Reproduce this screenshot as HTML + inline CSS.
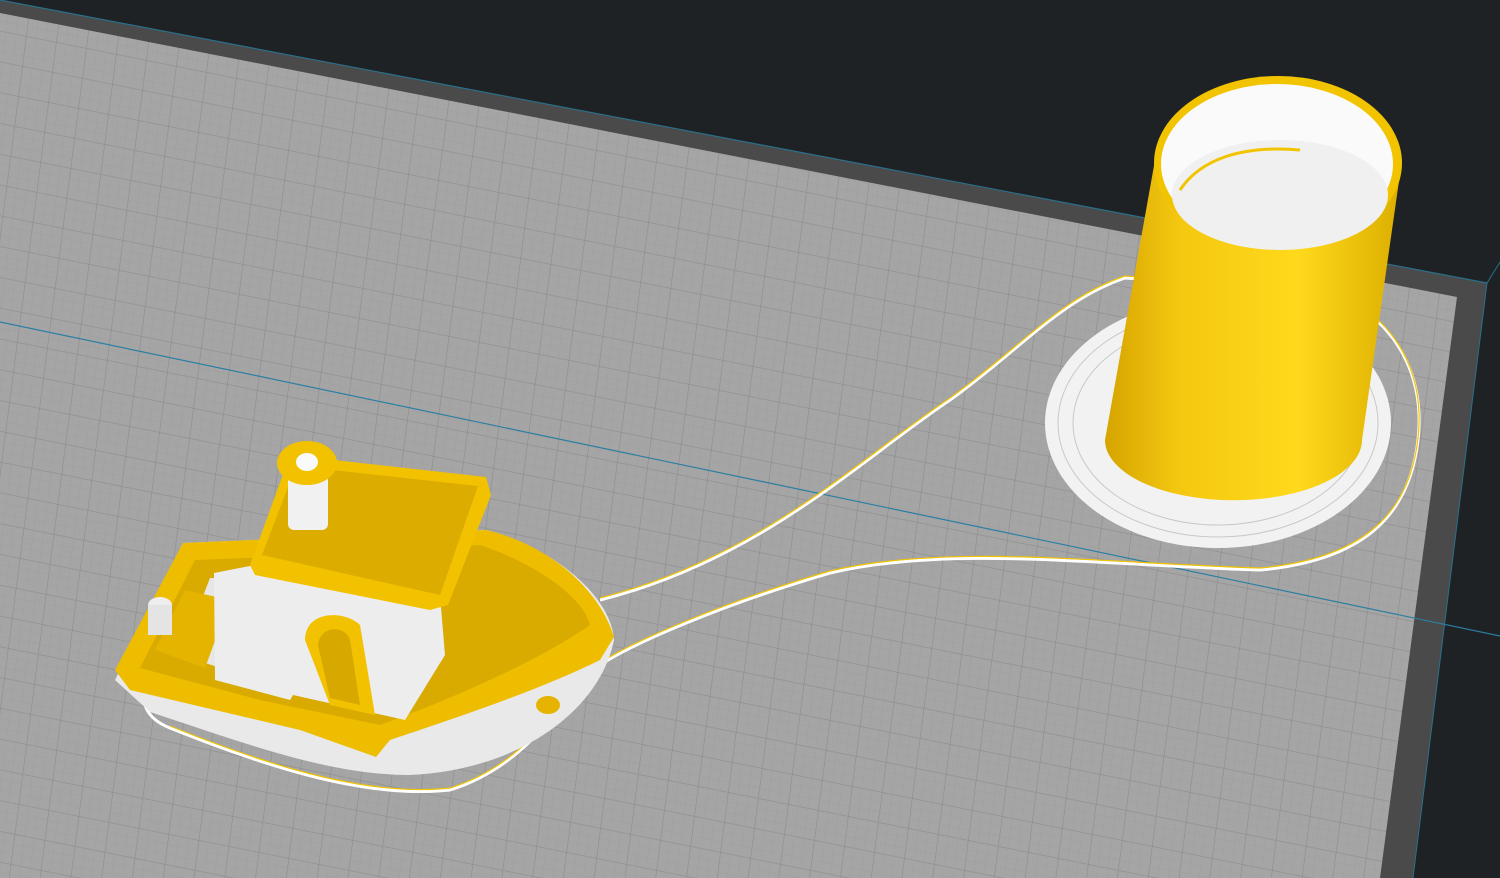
<!DOCTYPE html>
<html><head><meta charset="utf-8"><style>
html,body{margin:0;padding:0;background:#1e2225;overflow:hidden}
svg{display:block}
</style></head><body>
<svg width="1500" height="878" viewBox="0 0 1500 878" xmlns="http://www.w3.org/2000/svg">
<defs>
<pattern id="g" width="30" height="30" patternUnits="userSpaceOnUse" patternTransform="matrix(1,0.2,-0.13,1,0,0)">
<rect width="30" height="30" fill="#a5a5a5"/>
<path d="M0 0H30M0 0V30" stroke="#8c8c8c" stroke-width="1.2"/>
<path d="M0 10H30M0 20H30M10 0V30M20 0V30" stroke="#9e9e9e" stroke-width="0.5"/>
</pattern>
<linearGradient id="cyl" x1="0" x2="1" y1="0" y2="0">
<stop offset="0" stop-color="#d6a400"/><stop offset="0.25" stop-color="#f4c810"/><stop offset="0.65" stop-color="#ffd91c"/><stop offset="1" stop-color="#dcae00"/>
</linearGradient>
</defs>
<rect width="1500" height="878" fill="#1e2225"/>
<polygon points="0,0 1487,283 1413,878 0,878" fill="#4a4a4a"/>
<polygon points="0,13 1457,297 1380,878 0,878" fill="url(#g)"/>
<line x1="0" y1="0" x2="1487" y2="283" stroke="#2a6f8a" stroke-width="1.2"/>
<line x1="1487" y1="283" x2="1500" y2="262" stroke="#2a6f8a" stroke-width="1"/>
<line x1="1487" y1="283" x2="1413" y2="878" stroke="#2a6f8a" stroke-width="1"/>
<line x1="0" y1="322" x2="1500" y2="636" stroke="#2b7fa3" stroke-width="1.2"/>
<ellipse cx="1218" cy="423" rx="173" ry="125" fill="#f2f2f2"/>
<ellipse cx="1218" cy="423" rx="160" ry="114" fill="none" stroke="#c8c8c8" stroke-width="1"/>
<ellipse cx="1218" cy="423" rx="145" ry="102" fill="none" stroke="#c8c8c8" stroke-width="1"/>
<g fill="none">
<path d="M600,600 C760,560 860,460 950,400 C1020,350 1060,300 1125,278 L1330,292 C1400,320 1425,380 1418,440 C1410,510 1370,560 1260,570 C1100,565 950,545 830,573 C720,605 630,645 600,665" stroke="#fff" stroke-width="3"/>
<path d="M600,600 C760,560 860,460 950,400 C1020,350 1060,300 1125,278 L1330,292 C1400,320 1425,380 1418,440 C1410,510 1370,560 1260,570 C1100,565 950,545 830,573 C720,605 630,645 600,665" stroke="#f2c400" stroke-width="1.2" transform="translate(0,-2)"/>
<path d="M600,665 C560,700 530,765 450,790 C360,800 250,760 170,728 C145,718 140,700 148,690" stroke="#fff" stroke-width="3"/>
<path d="M600,663 C560,698 530,763 450,788 C360,798 250,758 170,726" stroke="#f2c400" stroke-width="1.2"/>
</g>
<path d="M1155,160 L1105,440 A128,60 0 0 0 1362,440 L1402,160 Z" fill="url(#cyl)"/>
<ellipse cx="1278" cy="163" rx="124" ry="87" fill="#f2c400"/>
<ellipse cx="1277" cy="164" rx="116" ry="80" fill="#fafafa"/>
<ellipse cx="1280" cy="195" rx="108" ry="55" fill="#f0f0f0"/>
<path d="M1180,190 C1200,160 1240,145 1300,150" fill="none" stroke="#f2c400" stroke-width="3"/>
<path d="M115,680 L183,543 L486,530 C560,550 612,600 614,640 C600,710 520,770 410,775 C330,775 250,745 150,712 Z" fill="#e9e9e9"/>
<path d="M115,670 L183,543 L486,530 C550,545 600,590 614,637 L600,660 C540,690 450,720 390,740 L376,757 L300,730 L130,690 Z" fill="#eebd00"/>
<path d="M140,668 L195,560 L300,556 L480,545 C540,565 585,600 590,625 C540,660 450,700 380,725 L260,700 Z" fill="#d9aa00"/>
<path d="M180,655 L210,578 L300,578 L290,690 Z" fill="#e6e6e6"/>
<path d="M155,650 L185,590 L230,600 L205,668 Z" fill="#e4b400"/>
<path d="M214,573 L255,565 L441,607 L445,655 L405,720 L293,695 L290,700 L215,680 Z" fill="#ededed"/>
<path d="M305,640 C305,610 345,610 360,625 L375,715 L330,705 Z" fill="#f2c200"/>
<path d="M318,645 C320,625 345,625 350,640 L360,705 L330,698 Z" fill="#d6a800"/>
<path d="M250,565 L290,455 L486,477 L491,495 L448,605 L430,610 L255,575 Z" fill="#f2c200"/>
<path d="M262,555 L296,466 L478,486 L440,595 Z" fill="#dcac00"/>
<rect x="288" y="470" width="40" height="60" rx="6" fill="#f1f1f1"/>
<ellipse cx="307" cy="463" rx="30" ry="22" fill="#f2c200"/>
<ellipse cx="307" cy="462" rx="11" ry="9" fill="#fafafa"/>
<ellipse cx="160" cy="605" rx="12" ry="8" fill="#eee"/>
<rect x="148" y="605" width="24" height="30" fill="#e4e4e4"/>
<ellipse cx="548" cy="705" rx="12" ry="9" fill="#e6b400"/>
</svg>
</body></html>
